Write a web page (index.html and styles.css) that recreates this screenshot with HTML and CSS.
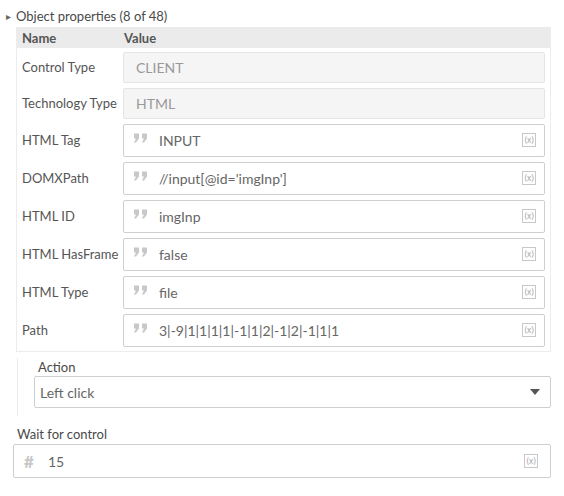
FILE: index.html
```html
<!DOCTYPE html>
<html lang="en">
<head>
    <meta charset="UTF-8">
    <title>Object properties</title>
    <link rel="stylesheet" href="styles.css">
</head>
<body>

<div class="section-title">
    <span class="caret">&#9656;</span>
    <span>Object properties (8 of 48)</span>
</div>

<div class="props">
    <div class="props-head">
        <div class="col-name">Name</div>
        <div class="col-value">Value</div>
    </div>

    <div class="prop-row">
        <div class="col-name">Control Type</div>
        <div class="field field-disabled">CLIENT</div>
    </div>
    <div class="prop-row">
        <div class="col-name">Technology Type</div>
        <div class="field field-disabled">HTML</div>
    </div>
    <div class="prop-row">
        <div class="col-name">HTML Tag</div>
        <div class="field"><svg class="quote" viewBox="0 0 14 9"><path d="M0 0h5v5l-3 4h-2l2-4h-2z M8 0h5v5l-3 4h-2l2-4h-2z"/></svg><span class="field-text">INPUT</span><span class="var">(x)</span></div>
    </div>
    <div class="prop-row">
        <div class="col-name">DOMXPath</div>
        <div class="field"><svg class="quote" viewBox="0 0 14 9"><path d="M0 0h5v5l-3 4h-2l2-4h-2z M8 0h5v5l-3 4h-2l2-4h-2z"/></svg><span class="field-text">//input[@id='imgInp']</span><span class="var">(x)</span></div>
    </div>
    <div class="prop-row">
        <div class="col-name">HTML ID</div>
        <div class="field"><svg class="quote" viewBox="0 0 14 9"><path d="M0 0h5v5l-3 4h-2l2-4h-2z M8 0h5v5l-3 4h-2l2-4h-2z"/></svg><span class="field-text">imgInp</span><span class="var">(x)</span></div>
    </div>
    <div class="prop-row">
        <div class="col-name">HTML HasFrame</div>
        <div class="field"><svg class="quote" viewBox="0 0 14 9"><path d="M0 0h5v5l-3 4h-2l2-4h-2z M8 0h5v5l-3 4h-2l2-4h-2z"/></svg><span class="field-text">false</span><span class="var">(x)</span></div>
    </div>
    <div class="prop-row">
        <div class="col-name">HTML Type</div>
        <div class="field"><svg class="quote" viewBox="0 0 14 9"><path d="M0 0h5v5l-3 4h-2l2-4h-2z M8 0h5v5l-3 4h-2l2-4h-2z"/></svg><span class="field-text">file</span><span class="var">(x)</span></div>
    </div>
    <div class="prop-row">
        <div class="col-name">Path</div>
        <div class="field"><svg class="quote" viewBox="0 0 14 9"><path d="M0 0h5v5l-3 4h-2l2-4h-2z M8 0h5v5l-3 4h-2l2-4h-2z"/></svg><span class="field-text">3|-9|1|1|1|1|-1|1|2|-1|2|-1|1|1</span><span class="var">(x)</span></div>
    </div>
</div>

<div class="action-group">
    <div class="label">Action</div>
    <div class="select">
        <span class="field-text">Left click</span>
        <svg class="arrow" width="10" height="6" viewBox="0 0 10 6"><path d="M0 0 H10 L5 6 Z" fill="#555"/></svg>
    </div>
</div>

<div class="wait-group">
    <div class="label">Wait for control</div>
    <div class="field field-wide">
        <span class="hash">#</span><span class="field-text">15</span><span class="var">(x)</span>
    </div>
</div>

</body>
</html>
```

FILE: styles.css
```css
/* General */
body {
    font-family: Lato, "Open Sans", sans-serif;
    font-size: 13px;
    color: #555;
    margin: 0;
    padding: 7px 13px 0 13px;
    background-color: #ffffff;
    width: 538px;
}

/* Section title */
.section-title {
    display: flex;
    align-items: center;
    gap: 5px;
    height: 17px;
    margin-left: -7px;
    color: #4a4a4a;
}
.caret {
    font-size: 10px;
    color: #666;
}

/* Properties table */
.props {
    margin: 3px 0 0 3px;
    border: 1px solid #ececec;
    border-top: none;
    padding-bottom: 2px;
}
.props-head {
    display: flex;
    align-items: center;
    height: 21px;
    background-color: #ebebeb;
    font-weight: bold;
    color: #555;
}
.col-name {
    width: 101px;
    padding-left: 5px;
    flex-shrink: 0;
}
.col-value {
    padding-left: 1px;
}
.prop-row {
    display: flex;
    align-items: center;
    height: 38px;
    padding-right: 5px;
}
.prop-row:nth-child(2) {
    margin-top: 1px;
}
.prop-row:nth-child(2),
.prop-row:nth-child(3) {
    height: 36px;
}

/* Fields */
.field {
    flex: 1;
    display: flex;
    align-items: center;
    height: 31px;
    border: 1px solid #cfcfcf;
    border-radius: 2px;
    padding: 0 8px 0 10px;
    color: #666;
    font-size: 14px;
    background-color: #fff;
}
.field-disabled {
    height: 29px;
    background-color: #f5f5f5;
    border-color: #e4e4e4;
    color: #999;
    padding-left: 12px;
}
.field-text {
    flex: 1;
}
.quote {
    width: 14px;
    height: 10px;
    fill: #c8c8c8;
    margin-right: 11px;
    margin-top: -4px;
}
.var {
    display: inline-flex;
    align-items: center;
    justify-content: center;
    width: 12px;
    height: 12px;
    border: 1px solid #c8c8c8;
    font-size: 8px;
    color: #aaa;
    font-family: "DejaVu Sans", sans-serif;
    letter-spacing: -0.5px;
}

/* Action */
.action-group {
    margin: 6px 0 0 4px;
    padding: 1px 0 8px 16px;
    border-left: 1px solid #ececec;
}
.label {
    color: #4a4a4a;
    padding-left: 4px;
    height: 17px;
}
.select {
    display: flex;
    align-items: center;
    height: 30px;
    border: 1px solid #cfcfcf;
    border-radius: 2px;
    padding: 0 10px 0 5px;
    font-size: 14px;
    color: #666;
}

/* Wait for control */
.wait-group {
    margin-top: 10px;
}
.wait-group .label {
    padding-left: 4px;
    height: 18px;
}
.field-wide {
    height: 32px;
    padding: 0 12px 0 10px;
}
.hash {
    font-size: 17px;
    font-weight: 900;
    color: #c8c8c8;
    width: 24px;
}
```
